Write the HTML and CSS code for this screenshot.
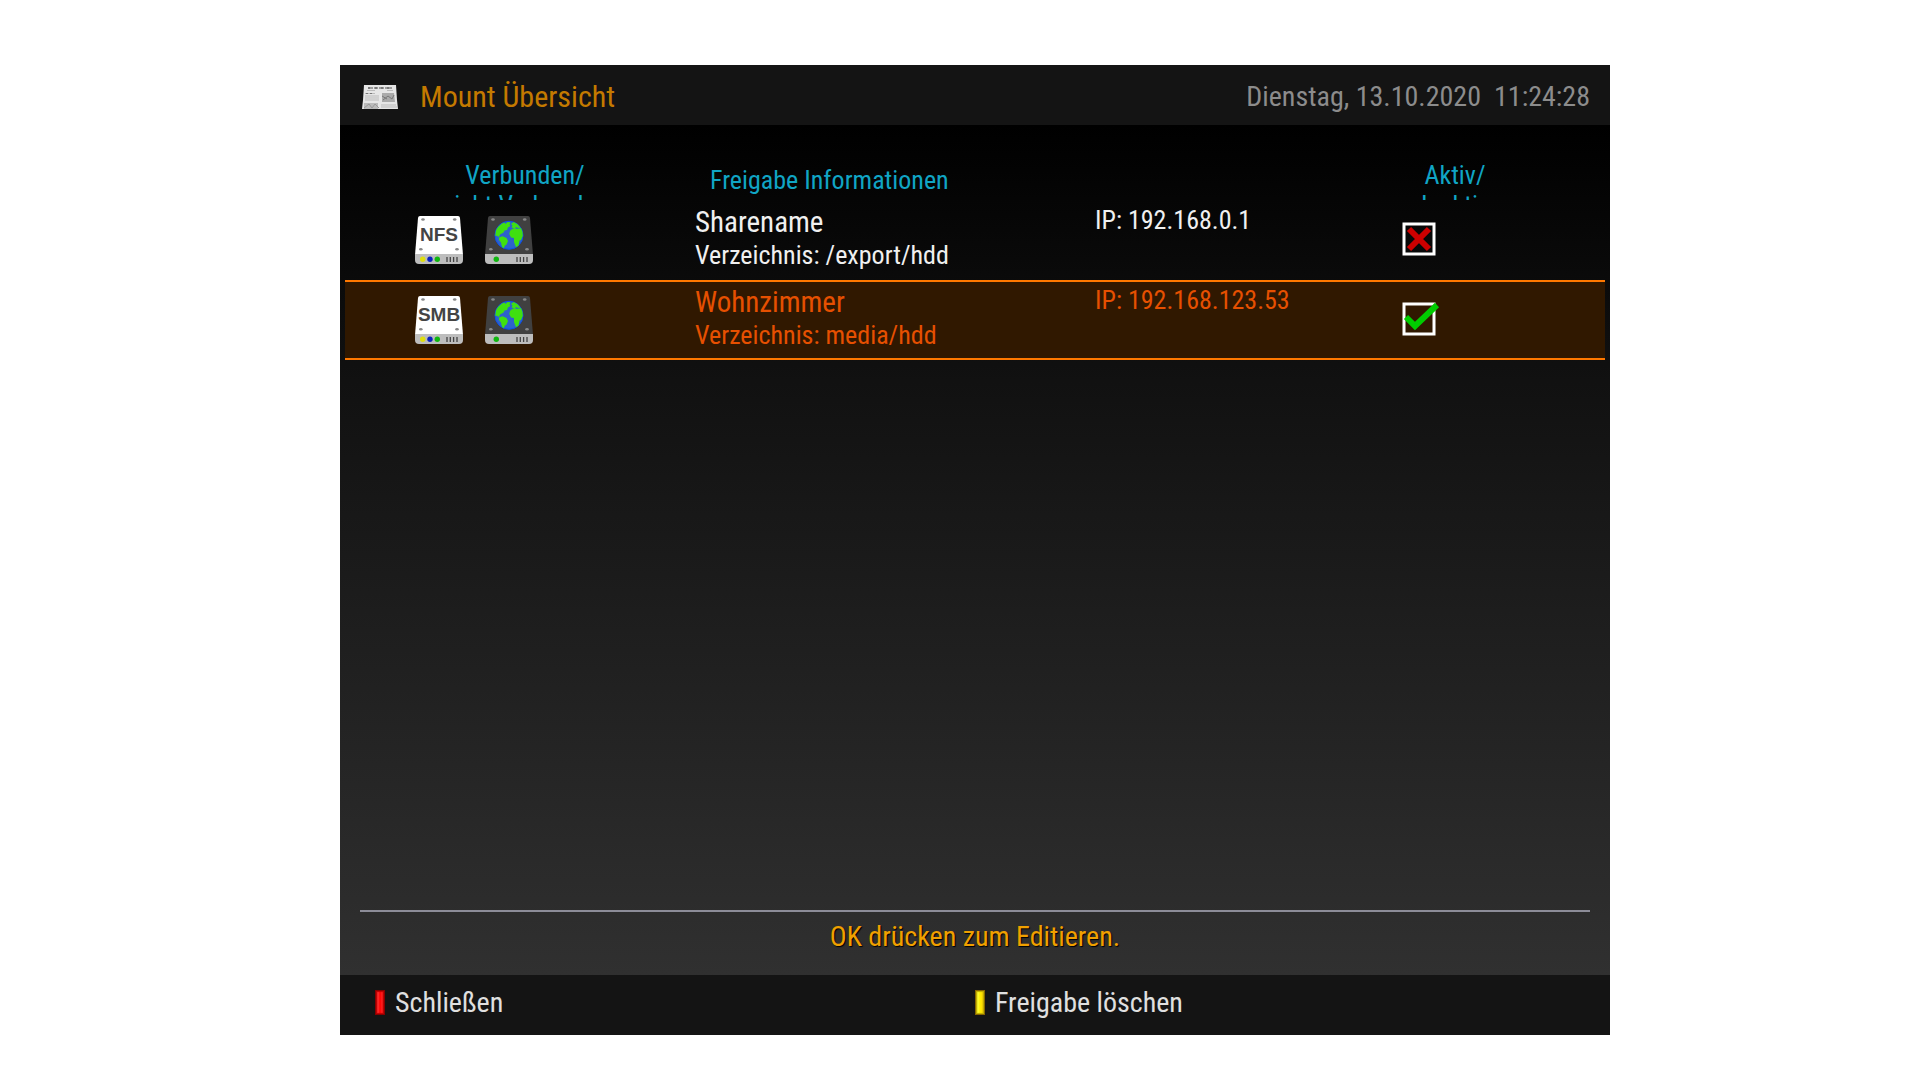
FILE: index.html
```html
<!DOCTYPE html>
<html lang="de">
<head>
  <meta charset="UTF-8" />
  <meta name="viewport" content="width=device-width, initial-scale=1.0"/>
  <title>Mount Übersicht</title>
  <link rel="stylesheet" href="styles.css">
</head>
<body>
  <!-- Shared icon shapes -->
  <svg class="defs" width="0" height="0" aria-hidden="true">
    <defs>
      <g id="base">
        <path d="M0 38h48v6q0 4-4 4H4q-4 0-4-4z" fill="#bdbdbd"/>
        <path d="M32 41v5M35.300 41v5M38.600 41v5M42 41v5" stroke="#444" stroke-width="1.300"/>
      </g>
      <g id="screws" fill="#888">
        <ellipse cx="8" cy="3.500" rx="1.800" ry="1.300"/>
        <ellipse cx="39.700" cy="3.500" rx="1.800" ry="1.300"/>
        <ellipse cx="5.800" cy="33.300" rx="1.800" ry="1.300"/>
        <ellipse cx="42" cy="33.300" rx="1.800" ry="1.300"/>
      </g>
      <g id="share">
        <path d="M5 0h38q1.800 0 2 2l3 37H0L3 2q.2-2 2-2z" fill="#fff"/>
        <use href="#screws"/>
        <use href="#base"/>
        <circle cx="7.700" cy="43.300" r="2.700" fill="#dede10"/>
        <circle cx="15" cy="43.300" r="2.700" fill="#0a22c0"/>
        <circle cx="22.300" cy="43.300" r="2.700" fill="#10b810"/>
      </g>
      <g id="network">
        <path d="M5 0h38q1.800 0 2 2l3 37H0L3 2q.2-2 2-2z" fill="#404040"/>
        <use href="#screws"/>
        <use href="#base"/>
        <circle cx="11.300" cy="43.300" r="2.700" fill="#10b810"/>
        <circle cx="24" cy="19.300" r="14" fill="#2e62cc" stroke="#0a50f0"/>
        <g fill="#3fe010">
          <path d="M10.500 20q-.5-6 3-9.500l3.500-3 2.500-1 1 1.500 2-2 3 .3-1 2.200 1 1.500-2.500 1.500-1 2.500-2.500.5-1 2-3.500 2-1 2.500-2-1.200z"/>
          <path d="M14 21.500l3.500-1.200 4 1.700 1.500 3-1.500 3.500-2 1.500-.5 2.300-2-1.300-1-4.500-2-2.500z"/>
          <path d="M26 8l2.500-2q4.500 1.500 7 5.500l-2.500.5-2-1-1 1.500-3.500-1 1-2z"/>
          <path d="M26.500 13.500l3-1.500 2.500 1 4-1q2 3.500 1.800 8l-1.800 4-1.500.5-1 5-2.500 1.800-2-5.300v-4l-3-.5-1.700-3.500.7-3z"/>
        </g>
      </g>
    </defs>
  </svg>

  <div class="screen">
    <header class="topbar">
      <svg class="news" viewBox="0 0 36 24" aria-hidden="true">
        <path d="M2 0h32l1 15 1 9H0l1-9z" fill="#e6e6e6"/>
        <path d="M6 3h5M12 3h4M17 3h5M23 3h7M7 2v2M14 2v2M20 2v2M26 2v2" stroke="#555"/>
        <path d="M5 5.500h8M25 5.500h6M3 8.500h10M3 11h14M3 13h14M3 15h14M19 20h15M19 22h16" stroke="#bbb"/>
        <path d="M4 8.500h2M8 8.500h2" stroke="#777"/>
        <path d="M20 8h12l1 9H20z" fill="#aaa"/>
        <path d="M21 15l5-4 4 3 2-4M20 11l5 3" stroke="#777" fill="none"/>
        <path d="M2 18h14v6H2z" fill="#bbb"/>
        <path d="M2 23l5-4 3 4 3-4 4 4" stroke="#999" fill="none"/>
      </svg>
      <h1>Mount Übersicht</h1>
      <div class="clock"><span>Dienstag, 13.10.2020</span><time>11:24:28</time></div>
    </header>

    <main>
      <table class="mounts">
        <colgroup>
          <col class="col-state">
          <col class="col-info">
          <col class="col-ip">
          <col>
        </colgroup>
        <thead>
          <tr>
            <th class="state"><div class="head">Verbunden/<br>nicht Verbunden</div></th>
            <th class="info" colspan="2">Freigabe Informationen</th>
            <th class="active"><div class="head">Aktiv/<br>Inaktiv</div></th>
          </tr>
        </thead>
        <tbody>
          <tr>
            <td>
              <div class="icons">
                <svg viewBox="0 0 48 48" role="img" aria-label="NFS"><use href="#share"/><text x="24" y="25">NFS</text></svg>
                <svg viewBox="0 0 48 48" aria-hidden="true"><use href="#network"/></svg>
              </div>
            </td>
            <td>
              <div class="name">Sharename</div>
              <div class="dir">Verzeichnis: /export/hdd</div>
            </td>
            <td class="ip">IP: 192.168.0.1</td>
            <td>
              <label class="check">
                <input type="checkbox" aria-label="Sharename aktiv">
                <svg viewBox="0 0 40 36" aria-hidden="true">
                  <rect x="2" y="2" width="30" height="30"/>
                  <path class="off" d="M7 7l20 20M27 7L7 27"/>
                  <path class="on" d="M4 15l9 9L35 3"/>
                </svg>
              </label>
            </td>
          </tr>
          <tr class="selected">
            <td>
              <div class="icons">
                <svg viewBox="0 0 48 48" role="img" aria-label="SMB"><use href="#share"/><text x="24" y="25">SMB</text></svg>
                <svg viewBox="0 0 48 48" aria-hidden="true"><use href="#network"/></svg>
              </div>
            </td>
            <td>
              <div class="name">Wohnzimmer</div>
              <div class="dir">Verzeichnis: media/hdd</div>
            </td>
            <td class="ip">IP: 192.168.123.53</td>
            <td>
              <label class="check">
                <input type="checkbox" aria-label="Wohnzimmer aktiv" checked>
                <svg viewBox="0 0 40 36" aria-hidden="true">
                  <rect x="2" y="2" width="30" height="30"/>
                  <path class="off" d="M7 7l20 20M27 7L7 27"/>
                  <path class="on" d="M4 15l9 9L35 3"/>
                </svg>
              </label>
            </td>
          </tr>
        </tbody>
      </table>
      <p class="hint">OK drücken zum Editieren.</p>
    </main>

    <footer class="keys">
      <button type="button"><span class="key red"></span>Schließen</button>
      <button type="button"><span class="key yellow"></span>Freigabe löschen</button>
    </footer>
  </div>
</body>
</html>
```
FILE: styles.css
```css
* {
  box-sizing: border-box;
}
body {
  margin: 0;
  min-height: 100vh;
  padding: 65px 310px 45px 340px;
  display: flex;
  background: #fff;
  font-family: "Roboto Condensed", Roboto, sans-serif;
  font-size: 26px;
  line-height: 30px;
}
.defs {
  position: absolute;
}
.screen {
  flex: 1;
  display: flex;
  flex-direction: column;
  color: #f0f0f0;
  background: #141414;
}

/* Header */
.topbar {
  display: flex;
  align-items: center;
  height: 60px;
  padding: 4px 20px 0 22px;
}
.news {
  width: 36px;
  height: 24px;
  margin-right: 22px;
}
h1 {
  margin: 0;
  font-size: 30px;
  font-weight: 400;
  color: #c47a00;
}
.clock {
  display: flex;
  gap: 13px;
  margin-left: auto;
  font-size: 28px;
  color: #8c8c8c;
}

/* Mount list */
main {
  flex: 1;
  display: flex;
  flex-direction: column;
  padding: 30px 5px 0;
  background: linear-gradient(#000, #101010 28%, #303030);
}
.mounts {
  width: 100%;
  table-layout: fixed;
  border-collapse: separate;
  border-spacing: 0;
}
.col-state {
  width: 350px;
}
.col-info {
  width: 400px;
}
.col-ip {
  width: 290px;
}
th {
  height: 45px;
  padding: 0;
  font-weight: 400;
  color: #10a5c5;
}
th.state {
  padding-left: 10px;
}
th.info {
  padding: 4px 0 0 15px;
  text-align: left;
}
th.active {
  padding-right: 80px;
}
.head {
  height: 45px;
  padding-top: 5px;
  overflow: hidden;
}
td {
  height: 80px;
  padding: 4px 0 0;
  vertical-align: top;
}
.icons {
  display: flex;
  gap: 22px;
  padding: 12px 0 0 70px;
}
.icons svg {
  width: 48px;
  height: 48px;
}
.icons text {
  font: bold 19px "Liberation Sans", sans-serif;
  text-anchor: middle;
  fill: #444;
}
.name {
  font-size: 29px;
  line-height: 36px;
}
.dir {
  line-height: 30px;
}
td.ip {
  padding-top: 5px;
}
.check {
  position: relative;
  display: block;
  width: 40px;
  margin: 18px 0 0 17px;
}
.check input {
  position: absolute;
  inset: 0;
  width: 100%;
  height: 100%;
  margin: 0;
  opacity: 0;
  cursor: pointer;
}
.check svg {
  display: block;
  width: 40px;
  height: 36px;
  fill: none;
}
.check rect {
  stroke: #fff;
  stroke-width: 3;
}
.check .off {
  stroke: #c00;
  stroke-width: 6;
}
.check .on {
  display: none;
  stroke: #0c0;
  stroke-width: 6;
}
.check input:checked + svg .on {
  display: block;
}
.check input:checked + svg .off {
  display: none;
}
.selected td {
  background: #301800;
  border-top: 2px solid #ff7800;
  border-bottom: 2px solid #ff7800;
  padding-top: 2px;
  color: #e65000;
}
.selected td.ip {
  padding-top: 3px;
}
.hint {
  margin: auto 15px 0;
  padding: 10px 0 23px;
  border-top: 2px solid #8c8c98;
  font-size: 28px;
  text-align: center;
  color: #f0a000;
  text-shadow: 1px 1px 1px #000;
}

/* Colour keys */
.keys {
  display: flex;
  height: 60px;
  padding: 0 35px;
}
button {
  display: flex;
  align-items: center;
  gap: 10px;
  width: 600px;
  padding: 0 0 5px;
  border: 0;
  background: none;
  font-family: inherit;
  font-size: 28px;
  color: #e0e0e0;
  cursor: pointer;
}
.key {
  width: 10px;
  height: 25px;
  border: 1px solid;
}
.red {
  border-color: #800;
  background: linear-gradient(90deg, #c00, #f33 25%, #f00 50%, #f22 75%, #c00);
  box-shadow: inset 0 0 1px 1px #b00;
}
.yellow {
  border-color: #860;
  background: linear-gradient(90deg, #cb0, #ff3 25%, #fe0 50%, #fd0 75%, #ca0);
  box-shadow: inset 0 0 1px 1px #ba0;
}
```
